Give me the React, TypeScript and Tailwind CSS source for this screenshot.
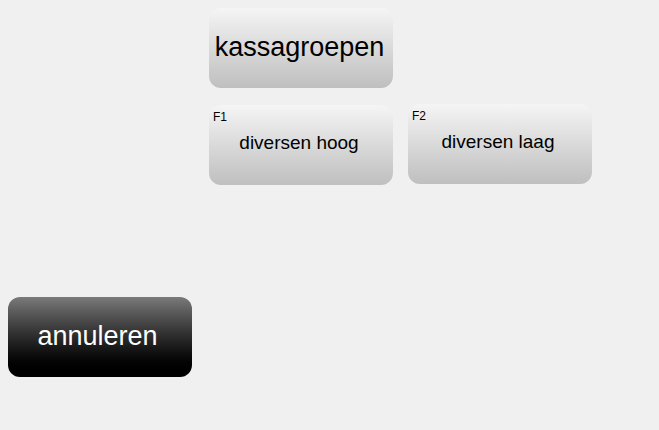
import React from 'react';

const GrayButton: React.FC<{ label: string; hotkey?: string; className?: string }> = ({ label, hotkey, className }) => (
  <div
    className={`relative w-[184px] h-[80px] rounded-[12px] bg-gradient-to-b from-[#f5f5f5] to-[#bfbfbf] flex items-center justify-center text-black ${className ?? ''}`}
  >
    {hotkey && <span className="absolute left-[4px] top-[6px] text-[12px] leading-none">{hotkey}</span>}
    {label}
  </div>
);

export default function App() {
  return (
    <div className="w-[659px] h-[430px] bg-[#f0f0f0] font-['Liberation_Sans',Arial,sans-serif] pl-[8px] pt-[8px]">
      <div className="flex">
        <div className="w-[184px] mr-[17px] flex flex-col">
          <div className="h-[289px]" />
          <div className="w-[184px] h-[80px] rounded-[12px] bg-gradient-to-b from-[#7a7a7a] to-[#000000] flex items-center justify-center text-white text-[27px] pb-[2px] pr-[5px]">
            annuleren
          </div>
        </div>
        <div className="flex flex-col gap-[17px]">
          <GrayButton label="kassagroepen" className="text-[27px] pb-[2px] pr-[3px]" />
          <div className="flex items-start gap-[15px]">
            <GrayButton label="diversen hoog" hotkey="F1" className="text-[19px] pb-[4px] pr-[4px]" />
            <GrayButton label="diversen laag" hotkey="F2" className="text-[19px] pb-[4px] pr-[4px] -mt-[1px]" />
          </div>
        </div>
      </div>
    </div>
  );
}
